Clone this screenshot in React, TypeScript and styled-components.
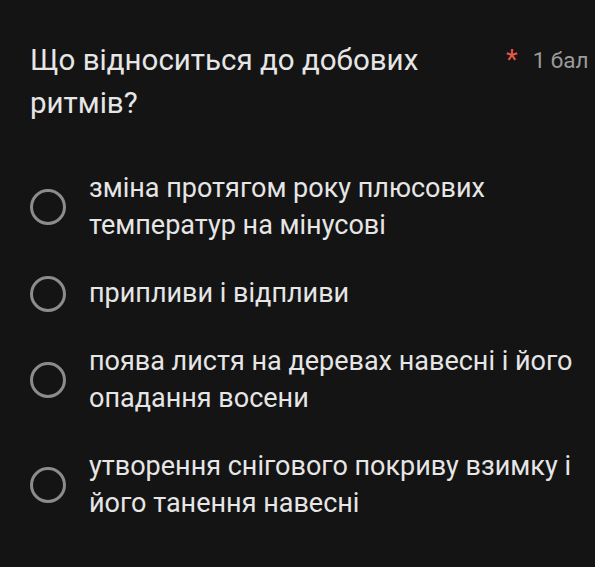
import React from "react";
import styled, { createGlobalStyle } from "styled-components";

const Global = createGlobalStyle`
  html, body { margin: 0; padding: 0; background: #141414; }
  body { font-family: Roboto, "Noto Sans", sans-serif; overflow: hidden; }
`;

const Page = styled.div`
  width: 595px;
  height: 567px;
  background: #141414;
  box-sizing: border-box;
  padding: 39px 0 0 30px;
  overflow: hidden;
`;

const Header = styled.div`
  display: flex;
  align-items: flex-start;
  width: 600px;
`;

const Title = styled.div`
  width: 440px;
  font-size: 29.5px;
  line-height: 43px;
  color: #e6e6e6;
`;

const Points = styled.div`
  margin-left: 36px;
  display: flex;
  align-items: flex-start;
  gap: 15px;
  font-size: 22.5px;
  line-height: 43px;
  color: #9b9b9b;
  white-space: nowrap;
`;

const Star = styled.span`
  color: #e8594a;
  font-size: 27px;
`;

const Options = styled.div`
  margin-top: 45px;
  display: flex;
  flex-direction: column;
  gap: 31px;
`;

const Option = styled.div`
  display: flex;
  align-items: center;
  gap: 23px;
`;

const Radio = styled.div`
  width: 30px;
  height: 30px;
  border: 3px solid #8c8c8c;
  border-radius: 50%;
  flex: none;
`;

const Label = styled.div`
  width: 500px;
  font-size: 27px;
  line-height: 37px;
  color: #e6e6e6;
`;

const options = [
  "зміна протягом року плюсових температур на мінусові",
  "припливи і відпливи",
  "поява листя на деревах навесні і його опадання восени",
  "утворення снігового покриву взимку і його танення навесні",
];

export default function App() {
  return (
    <Page>
      <Global />
      <Header>
        <Title>Що відноситься до добових ритмів?</Title>
        <Points>
          <Star>*</Star>
          <span>1 бал</span>
        </Points>
      </Header>
      <Options>
        {options.map((o) => (
          <Option key={o}>
            <Radio />
            <Label>{o}</Label>
          </Option>
        ))}
      </Options>
    </Page>
  );
}
